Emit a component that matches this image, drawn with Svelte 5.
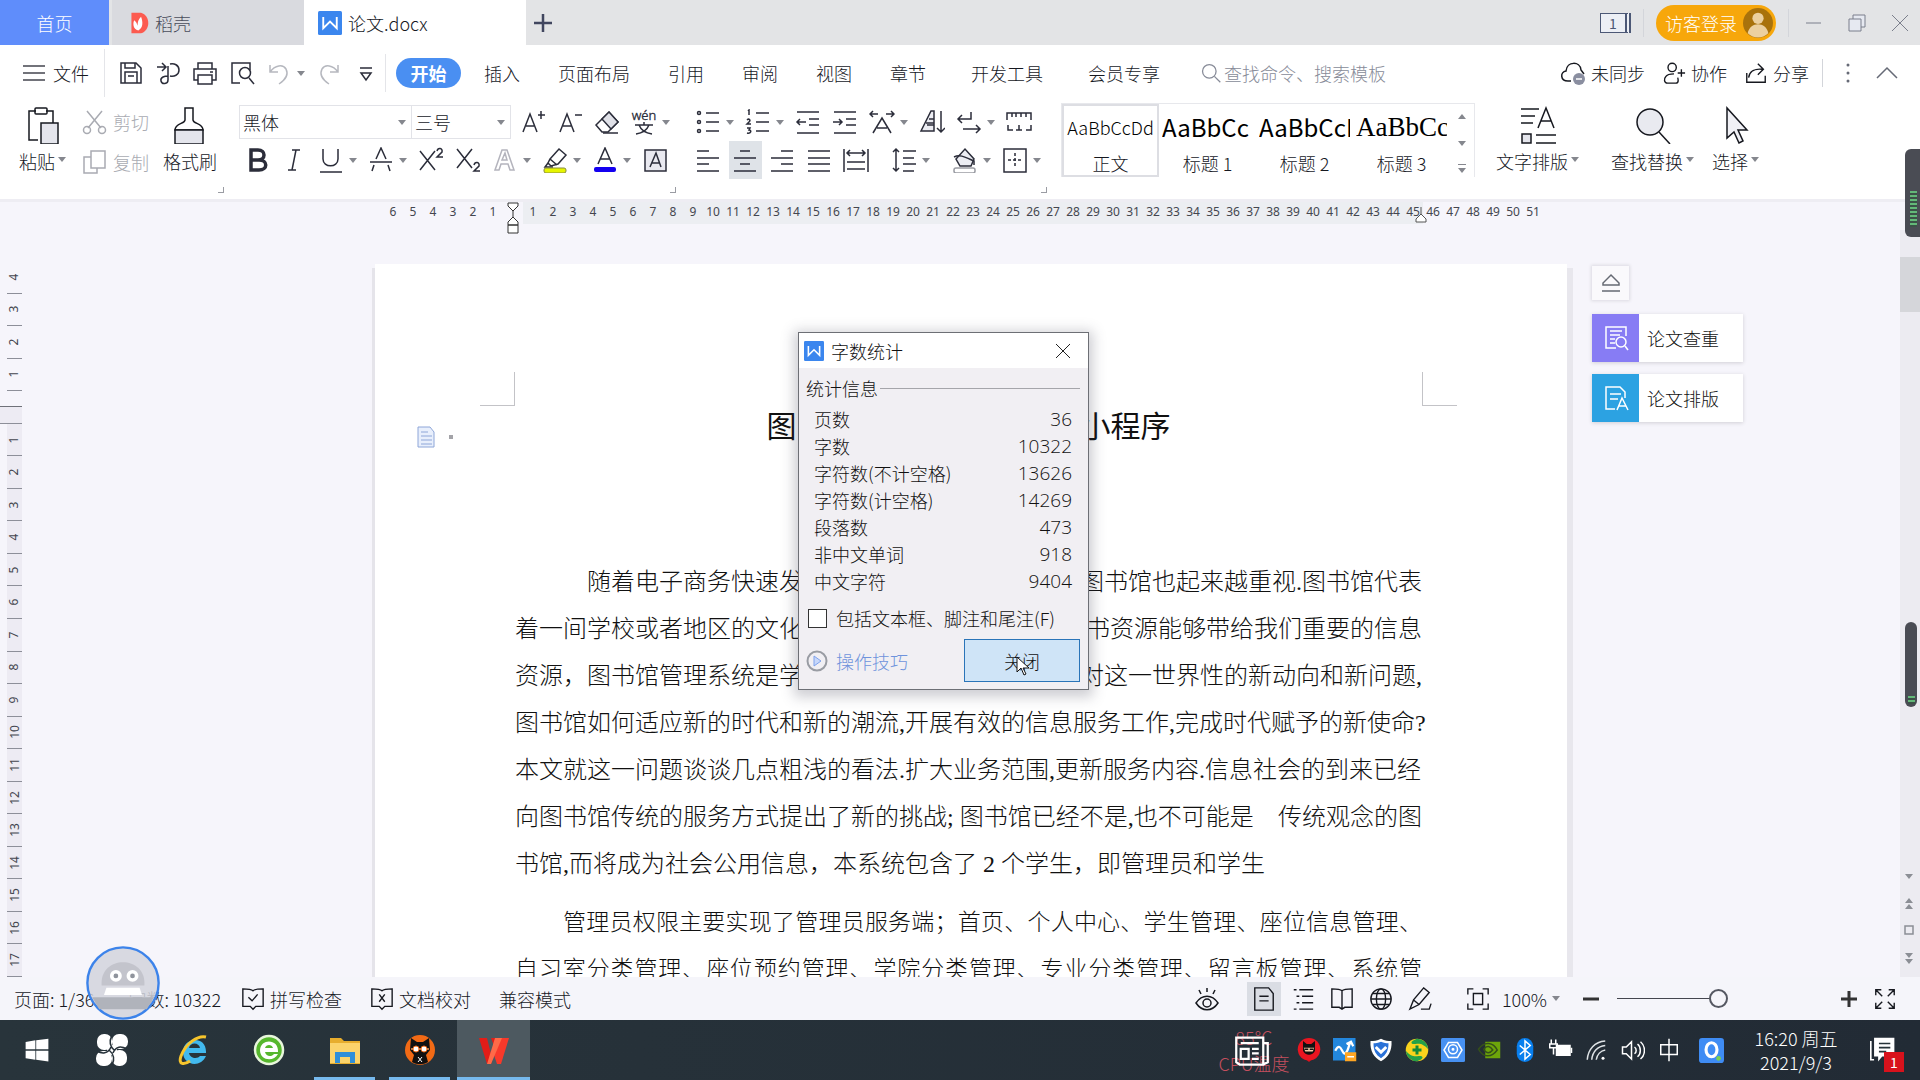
<script>
    let fontName = '黑体';
    let fontSize = '三号';
    let zoom = 50;
    let includeNotes = false;

    const menuTabs = [
        { label: '插入' },
        { label: '页面布局' },
        { label: '引用' },
        { label: '审阅' },
        { label: '视图' },
        { label: '章节' },
        { label: '开发工具', wide: true },
        { label: '会员专享', wide: true }
    ];

    const quickTools = [
        { icon: 'save', label: '保存' },
        { icon: 'output', label: '输出' },
        { icon: 'print', label: '打印' },
        { icon: 'preview', label: '打印预览' },
        { icon: 'undo', label: '撤销', faded: true, caret: true },
        { icon: 'redo', label: '恢复', faded: true },
        { icon: 'custom', label: '自定义' }
    ];

    const fontRow1 = [
        { icon: 'grow', label: '增大字号' },
        { icon: 'shrink', label: '减小字号' },
        { icon: 'eraser', label: '清除格式' },
        { icon: 'pinyin', label: '拼音指南', caret: true }
    ];

    const fontRow2 = [
        { icon: 'bold', label: '加粗' },
        { icon: 'italic', label: '倾斜' },
        { icon: 'underline', label: '下划线', caret: true },
        { icon: 'strike', label: '删除线', caret: true },
        { icon: 'sup', label: '上标' },
        { icon: 'sub', label: '下标' },
        { icon: 'effect', label: '文字效果', caret: true },
        { icon: 'highlight', label: '突出显示', caret: true },
        { icon: 'color', label: '字体颜色', caret: true },
        { icon: 'shade', label: '字符底纹' }
    ];

    const paraRow1 = [
        { icon: 'bullets', label: '项目符号', caret: true },
        { icon: 'numbers', label: '编号', caret: true },
        { icon: 'outdent', label: '减少缩进' },
        { icon: 'indent', label: '增加缩进' },
        { icon: 'scale', label: '中文版式', caret: true },
        { icon: 'sort', label: '排序' },
        { icon: 'marks', label: '显示标记', caret: true },
        { icon: 'tabs', label: '制表位' }
    ];

    const paraRow2 = [
        { icon: 'left', label: '左对齐' },
        { icon: 'center', label: '居中', active: true },
        { icon: 'right', label: '右对齐' },
        { icon: 'justify', label: '两端对齐' },
        { icon: 'spread', label: '分散对齐' },
        { icon: 'spacing', label: '行距', caret: true, apart: true },
        { icon: 'fill', label: '底纹颜色', caret: true, apart: true },
        { icon: 'border', label: '边框', caret: true }
    ];

    const styleItems = [
        { sample: 'AaBbCcDd', label: '正文', kind: 'body' },
        { sample: 'AaBbCc', label: '标题 1', kind: 'head' },
        { sample: 'AaBbCcD', label: '标题 2', kind: 'head' },
        { sample: 'AaBbCc', label: '标题 3', kind: 'serif' }
    ];

    const bigTools = [
        { icon: 'typeset', label: '文字排版' },
        { icon: 'find', label: '查找替换' },
        { icon: 'pointer', label: '选择' }
    ];

    const rulerBefore = [6, 5, 4, 3, 2, 1];
    const rulerAfter = Array.from({ length: 51 }, (_, i) => i + 1);
    const sideBefore = [4, 3, 2, 1];
    const sideAfter = Array.from({ length: 17 }, (_, i) => i + 1);

    // the dialog lies between the start and the end of each split line
    const paragraph1 = [
        { start: '随着电子商务快速发', end: '图书馆也起来越重视.图书馆代表', indent: 3 },
        { start: '着一间学校或者地区的文化', end: '书资源能够带给我们重要的信息' },
        { start: '资源，图书馆管理系统是学校', end: '对这一世界性的新动向和新问题,' },
        { start: '图书馆如何适应新的时代和新的潮流,开展有效的信息服务工作,完成时代赋予的新使命?' },
        { start: '本文就这一问题谈谈几点粗浅的看法.扩大业务范围,更新服务内容.信息社会的到来已经' },
        { start: '向图书馆传统的服务方式提出了新的挑战; 图书馆已经不是,也不可能是', end: '传统观念的图' },
        { start: '书馆,而将成为社会公用信息，本系统包含了 2 个学生，即管理员和学生' }
    ];
    const paragraph2 = [
        { start: '管理员权限主要实现了管理员服务端；首页、个人中心、学生管理、座位信息管理、', indent: 2, full: true },
        { start: '自习室分类管理、座位预约管理、学院分类管理、专业分类管理、留言板管理、系统管', full: true }
    ];

    const stats = [
        ['页数', 36],
        ['字数', 10322],
        ['字符数(不计空格)', 13626],
        ['字符数(计空格)', 14269],
        ['段落数', 473],
        ['非中文单词', 918],
        ['中文字符', 9404]
    ];

    const views = [
        { icon: 'page', label: '页面视图', active: true },
        { icon: 'outline', label: '大纲' },
        { icon: 'book', label: '阅读版式' },
        { icon: 'globe', label: 'Web版式' },
        { icon: 'pen', label: '写作模式' }
    ];

    const apps = [
        { icon: 'windows', label: '开始' },
        { icon: 'swirl', label: '助手' },
        { icon: 'ie', label: 'Internet Explorer', apart: true },
        { icon: 'browser', label: '浏览器' },
        { icon: 'folder', label: '文件资源管理器', open: true },
        { icon: 'cat', label: '录屏', open: true },
        { icon: 'wps', label: 'WPS', open: true, active: true }
    ];

    const tray = ['ninja', 'sync', 'shield', 'plus360', 'hex', 'nvidia', 'bluetooth', 'battery', 'wifi', 'sound', 'ime'];

    const icons = {
        // title bar and menu row
        save: '<path d="M3 3h15l5 5v15H3z"/><path d="M7 3v5h10V3M7 23V12h12v11M10 16h6"/>',
        output: '<path d="M2 7h9M7 3l4 4-4 4M15 4c4-1 9 1 9 6s-5 7-9 6M13 6v14c0 4-6 5-7 1s4-5 7-5"/>',
        print: '<path d="M6 9V3h14v6M6 20H2V9h22v11h-4M6 15h14v9H6zM18 12h3"/>',
        preview: '<path d="M11 23H3V3h18v7"/><circle cx="16" cy="13" r="5.500"/><path d="M20 18l5 6"/>',
        undo: '<path d="M4 5v7h8M4 12C9 5 17 4 20 9c3 6-1 11-7 15"/>',
        redo: '<path d="M22 5v7h-8M22 12C17 5 9 4 6 9c-3 6 1 11 7 15"/>',
        custom: '<path d="M7 8h12M8 13h10l-5 7z"/>',
        search: '<circle cx="11" cy="11" r="8"/><path d="M17 17l7 7"/>',
        cloud: '<path d="M11 21H8c-8 0-8-9-2-10C7 1 20 1 21 10l3 4"/><circle cx="19" cy="19" r="6" fill="#8a8ea0" stroke="none"/><path d="M16 19h6" stroke="#fff"/>',
        people: '<circle cx="11" cy="7" r="4.500"/><path d="M17 18c0 0 2 6-2 6H6c-4 0-4-5-2-7 2-3 6-3 9-3M17 13h8M21 9v8"/>',
        share: '<path d="M3 13v10h20v-7M5 18c1-7 7-10 15-9M15 3l6 6-6 6"/>',
        // ribbon
        paste: '<path d="M14 34H5V5h7M22 5h7v12"/><rect x="11" y="2" width="12" height="6" rx="1"/><rect x="17" y="17" width="17" height="21" fill="#e4e5ec"/>',
        cut: '<path d="M5 2l14 17M20 2L6 19"/><circle cx="5" cy="21" r="3.500"/><circle cx="20" cy="21" r="3.500"/>',
        copy: '<path d="M9 2h14v17H9z"/><path d="M9 8H2v16h13v-5"/>',
        brush: '<path d="M14 2h8v12c0 4 10 3 10 10H4c0-7 10-6 10-10z"/><path d="M4 24h28v14H4z" fill="#e4e5ec"/>',
        grow: '<path d="M3 23L10 5l7 18M6 17h8M18 6h7M21 2v8"/>',
        shrink: '<path d="M3 23L10 5l7 18M6 17h8M18 6h7"/>',
        eraser: '<path d="M2 16L15 3l9 10-10 10H8z"/><path d="M8 10l9 10 7-7-9-10z" fill="#e0e1e8"/><path d="M9 24h15"/>',
        pinyin: '<text x="13" y="11" text-anchor="middle" font-size="13" fill="#2b2d3a" stroke="#2b2d3a" stroke-width="0.400" font-family="Noto Sans">wén</text><path d="M4 16h18M13 13v3M18 16c-2 5-6 8-13 9M8 16c2 5 6 8 13 9"/>',
        bold: '<path d="M7 3h7c8 0 8 10 0 10H7zM7 13h8c9 0 9 10 0 10H7z" stroke-width="3.500"/>',
        italic: '<path d="M11 3h8M7 23h8M15 3l-4 20"/>',
        underline: '<path d="M5 2v10c0 9 15 9 15 0V2M2 25h22"/>',
        strike: '<path d="M2 15h22M8 12l5-11 5 11M6 18l-2 6M20 18l2 6"/>',
        sup: '<path d="M2 4l15 19M17 4L2 23M19 4c1-4 6-3 5 1l-5 5h6"/>',
        sub: '<path d="M2 2l15 19M17 2L2 21M19 18c1-4 6-3 5 1l-5 5h6"/>',
        effect: '<path d="M3 23L10 3h5l7 20h-4l-2-6H9l-2 6zM10 13h5l-2-7z" stroke="#b4b4bd"/>',
        highlight: '<path d="M8 12l9-10 7 6-8 9-7 2-3-3zM8 12l7 6"/><path d="M6 16l-3 4h8" /><rect x="2" y="21" width="22" height="5" rx="2" fill="#e6f500" stroke="#888b40" stroke-width="1"/>',
        color: '<path d="M6 17L13 1l7 16M8 12h10"/><rect x="2" y="20" width="22" height="5" rx="2" fill="#1400f0" stroke="none"/>',
        shade: '<rect x="3" y="3" width="21" height="21" fill="#e9e9f0"/><path d="M8 20l6-14 5 14M10 16h8"/>',
        bullets: '<circle cx="4" cy="4" r="1.500"/><circle cx="4" cy="13" r="1.500"/><circle cx="4" cy="22" r="1.500"/><path d="M11 4h13M11 13h13M11 22h13"/>',
        numbers: '<path d="M11 4h13M11 13h13M11 22h13M3 2l1-1v5M2 11c2-2 4 0 2 2l-2 2h4M2 19h3l-1 2c3 0 2 4-2 3"/>',
        outdent: '<path d="M2 3h22M14 10h10M14 16h10M2 24h22M11 13H2M5 10l-3 3 3 3"/>',
        indent: '<path d="M2 3h22M14 10h10M14 16h10M2 24h22M1 13h9M7 10l3 3-3 3"/>',
        scale: '<path d="M4 24L13 9l9 15M8 19h10M1 5h8M4 2L1 5l3 3M25 5h-8M22 2l3 3-3 3"/>',
        sort: '<path d="M8 16h7M10 10h5M15 2v20H2L12 2z" fill="#ecedf3"/><path d="M7 14h8M22 2v21M18 19l4 4 4-4"/>',
        marks: '<path d="M15 3v7H3M6 6L2 10l4 4M7 20h17M20 16l4 4-4 4"/>',
        tabs: '<path d="M1 11V4h24v7M6 4v4M10 4v4M15 4v4M20 4v4M2 16v5h5M25 16v5h-5M13 16v5M10 21h6"/>',
        left: '<path d="M2 4h12M2 11h22M2 17h12M2 24h22"/>',
        center: '<path d="M8 4h10M2 11h22M8 17h10M2 24h22"/>',
        right: '<path d="M12 4h12M2 11h22M12 17h12M2 24h22"/>',
        justify: '<path d="M2 4h22M2 11h22M2 17h22M2 24h22"/>',
        spread: '<path d="M1 2v23M25 2v23M4 6h18M7 3L4 6l3 3M19 3l3 3-3 3M4 15h18M4 22h18"/>',
        spacing: '<path d="M5 2v22M2 5l3-3 3 3M2 21l3 3 3-3M12 4h13M12 11h11M12 17h13M12 24h11"/>',
        fill: '<path d="M4 12L13 2l9 10-3 7H8z" fill="#ecedf3"/><path d="M2 10c6-3 11 0 20 4v4"/><rect x="2" y="21" width="21" height="5" rx="2" stroke="#9a9ca3" fill="#fff"/>',
        border: '<path d="M2 2h22v23H2z"/><path d="M13 6v15M6 13h14" stroke-dasharray="3 2"/>',
        typeset: '<path d="M2 3h18M2 10h14M2 17h12M19 22L27 2l8 20M22 15h10M17 29h20M17 37h20"/><path d="M3 28h9v9H3z" fill="#e4e5ec"/>',
        find: '<circle cx="16" cy="16" r="13" fill="#e9eaf0"/><path d="M25 26l11 12"/>',
        pointer: '<path d="M10 2v30l7-6 5 11 4-2-5-11h9z" fill="#f0f0f5"/>',
        // status bar
        spell: '<path d="M13 4c-2-2-5-2-11-2v19h8l3 3 3-3h8V2c-6 0-9 0-11 2z"/><path d="M8 11l4 4 6-7"/>',
        proof: '<path d="M13 4c-2-2-5-2-11-2v19h8l3 3 3-3h8V2c-6 0-9 0-11 2z"/><path d="M10 8l6 8M16 8l-6 8"/>',
        eye: '<path d="M2 17c6-9 16-9 22 0-6 9-16 9-22 0z"/><circle cx="13" cy="17" r="4"/><path d="M13 2v4M5 4l2 4M21 4l-2 4"/>',
        page: '<path d="M3 1h15l5 6v18H3zM8 10h10M8 15h10"/>',
        outline: '<path d="M3 3h3M9 3h15M6 10h3M12 10h12M6 17h3M12 17h12M3 24h3M9 24h15"/>',
        book: '<path d="M13 4c-2-2-5-2-11-2v20h8l3 2 3-2h8V2c-6 0-9 0-11 2zM13 4v20"/>',
        globe: '<circle cx="13" cy="13" r="11"/><ellipse cx="13" cy="13" rx="5" ry="11"/><path d="M2 13h22M4 7h18M4 19h18"/>',
        pen: '<path d="M2 24l4-10L17 1l6 5-11 13zM6 14l6 5M14 24h9l2-6"/>',
        fit: '<path d="M2 8V2h6M18 2h6v6M24 18v6h-6M8 24H2v-6M8 7h10v12H8z"/>',
        expand: '<path d="M3 9V3h6M3 3l7 7M17 3h6v6M23 3l-7 7M3 17v6h6M3 23l7-7M23 17v6h-6M23 23l-7-7"/>',
        // floating panel
        check: '<path d="M13 23H3V2h20v9M7 6h12M7 10h10M7 14h5M7 18h5"/><circle cx="18" cy="17" r="5"/><path d="M22 21l3 4"/>',
        layout: '<path d="M12 24H3V2h14l5 5v6M7 9h11M7 14h8M14 25l5-12 6 12M16 21h7"/>'
    };

    // coloured pictures, each on a 32 unit canvas
    const pictures = {
        wfile: '<rect width="32" height="32" rx="2" fill="#3b86ee"/><path d="M7 8v15l9-9 9 9V8" fill="none" stroke="#fff" stroke-width="2.500"/>',
        docer: '<path d="M5 1h14c14 4 14 26 0 30H5z" fill="#fc5b50"/><path d="M15 27C7 25 7 16 9 12c3 2 4 5 5 8 0-6 1-9 5-13 3 8 3 16-4 20z" fill="#fff"/>',
        user: '<circle cx="16" cy="16" r="16" fill="#a9720c"/><circle cx="16" cy="11" r="6" fill="#ecd0a0"/><path d="M5 27c2-13 20-13 22 0-6 6-16 6-22 0z" fill="#ecd0a0"/>',
        robot: '<circle cx="16" cy="16" r="15" fill="#d2d4dc" fill-opacity="0.850" stroke="#3c83ea" stroke-width="1"/><path d="M7 17c-1-13 19-13 18 0z" fill="#c3c4cc"/><circle cx="13" cy="13" r="2.500" fill="#fff"/><circle cx="20" cy="13" r="2.500" fill="#fff"/><circle cx="13" cy="13" r="1" fill="#8f939c"/><circle cx="20" cy="13" r="1" fill="#8f939c"/><path d="M9 18h14l1 3H8z" fill="#fff"/><path d="M3 22h26l-3 5H6z" fill="#b0b3bb"/>',
        windows: '<path d="M2 6l12-2v11H2zM15 4l15-2v13H15zM2 17h12v11L2 26zM15 17h15v13l-15-2z" fill="#fff"/>',
        swirl: '<g fill="#fff"><rect x="1" y="0" width="15" height="16" rx="7"/><rect x="16" y="0" width="16" height="15" rx="7"/><rect x="16" y="16" width="15" height="16" rx="7"/><rect x="0" y="17" width="16" height="15" rx="7"/><circle cx="16" cy="16" r="5"/></g><g fill="none" stroke="#27323a" stroke-width="1.500"><path d="M16 1c-3 6-2 12 3 16M31 15c-6-3-11-3-14 4M16 31c3-5 2-11-3-15M1 17c5 3 11 3 14-4"/></g>',
        ie: '<path d="M28 19H11c1 6 9 6 11 3h6C23 34 5 32 5 18 5 3 29 1 28 19zM11 14h11c-1-6-10-6-11 0z" fill="#42b9ee"/><path d="M28 3C20 1 8 9 3 22c-3 9 3 9 9 5" fill="none" stroke="#f7c52c" stroke-width="3"/>',
        browser: '<circle cx="16" cy="16" r="14" fill="#56b72d" stroke="#e8f6dc" stroke-width="2.500"/><path d="M25 18H12c1 5 7 5 9 2h4C21 28 7 27 7 16 8 4 26 5 25 18zM12 14h8c-1-4-7-4-8 0z" fill="#fff"/>',
        folder: '<path d="M1 4h11l3 3h16v23H1z" fill="#e7ad2d"/><path d="M1 9h30v20H1z" fill="#fbd36b"/><path d="M6 29V18h20v11h-5v-6h-10v6z" fill="#2f8ed8"/>',
        cat: '<circle cx="16" cy="16" r="15" fill="#f26a15"/><path d="M7 4l6 4h6l6-4 1 12-4 5 2 7c-5 3-11 3-16 0l2-7-4-5z" fill="#111"/><path d="M7 15h18" stroke="#f79b54" stroke-width="1.500"/><circle cx="12" cy="15" r="3" fill="#fff" stroke="#f26a15"/><circle cx="20" cy="15" r="3" fill="#fff" stroke="#f26a15"/><path d="M14 23l4 5M18 23l-4 5" stroke="#fff"/>',
        wps: '<path d="M1 4h8l4 16 3-8-3-8h8L13 30H9z" fill="#e21d18"/><path d="M22 4h9L23 30h-4l-3-9z" fill="#f8392a"/><path d="M17 4h7L13 30H9z" fill="#ff6a48"/>',
        ninja: '<path d="M7 24h18l-9 8z" fill="#d8101c"/><circle cx="16" cy="15" r="15" fill="#e91520"/><path d="M8 4l5 4h6l5-4v13c-3 7-13 7-16 0z" fill="#111"/><path d="M9 13h14l-2 5H11z" fill="#f7cda8"/><path d="M10 15h5M17 15h5" stroke="#111" stroke-width="2"/>',
        sync: '<rect width="30" height="30" fill="#2387dd"/><path d="M3 17c8-15 9 8 14 3 4-4 3-8 6-14M18 8l6-3 3 6" fill="none" stroke="#fff" stroke-width="3"/><rect x="16" y="19" width="15" height="12" fill="#ffa623"/><path d="M19 25h9" stroke="#fff" stroke-width="2"/>',
        shield: '<path d="M16 1c5 3 10 3 14 3 1 14-5 22-14 27C7 26 1 18 2 4c4 0 9 0 14-3z" fill="#fff"/><path d="M16 5c4 2 7 2 10 2 0 10-3 15-10 20C9 22 6 17 6 7c3 0 6 0 10-2z" fill="#2a72d8"/><path d="M9 12l7 7 7-7" fill="none" stroke="#fff" stroke-width="4"/>',
        plus360: '<circle cx="16" cy="16" r="15" fill="#f9d31c"/><path d="M16 1a15 15 0 0 1 15 14c-7-8-12-8-17-7C8 9 5 5 16 1zM16 31A15 15 0 0 1 1 17c7 8 12 8 17 7 6-1 9 3-2 7z" fill="#24a148"/><path d="M16 10v12M10 16h12" stroke="#13893a" stroke-width="4"/>',
        hex: '<rect width="32" height="32" rx="2" fill="#4791f2"/><g fill="none" stroke="#fff" stroke-width="2"><path d="M10 6h12l6 10-6 10H10L4 16z"/><circle cx="16" cy="15" r="6"/><circle cx="16" cy="15" r="1"/></g>',
        nvidia: '<rect x="11" y="5" width="20" height="22" fill="#6da50a"/><g fill="none" stroke="#35501a" stroke-width="2"><path d="M2 15c8-12 20-9 25 1-8 11-19 10-25-1z"/><path d="M9 15c4-6 9-4 12 1-4 5-9 5-12-1z"/></g>',
        bluetooth: '<rect x="5" y="0" width="22" height="32" rx="11" fill="#087fee"/><path d="M9 10l14 12-7 6V4l7 6L9 22" fill="none" stroke="#fff" stroke-width="2"/>',
        battery: '<g fill="none" stroke="#fff" stroke-width="2"><path d="M3 2v6M9 2v6M1 8h10v5H1zM6 13v9"/></g><rect x="9" y="9" width="20" height="15" fill="#fff"/><path d="M30 13v7" stroke="#fff" stroke-width="2"/>',
        wifi: '<g fill="none" stroke="#dfe3e6" stroke-width="2"><path d="M3 29C4 15 13 5 27 4M9 29c1-11 8-18 18-19M15 29c1-7 6-12 12-13"/></g><circle cx="24" cy="27" r="2" fill="#fff"/>',
        sound: '<g fill="none" stroke="#fff" stroke-width="2"><path d="M2 12h5l7-7v23l-7-7H2zM18 12c3 2 3 7 0 9M22 8c5 4 5 13 0 17M26 5c7 6 7 17 0 23"/></g>',
        ime: '<g fill="none" stroke="#fff" stroke-width="2"><path d="M5 9h22v13H5zM16 1v30"/></g>',
        news: '<g fill="none" stroke="#fff" stroke-width="2"><path d="M2 4h24v24H5l-3-2zM26 9h4v17l-4 2M6 9h16M6 14h7v9H6zM16 14h6M16 18h6M16 23h6"/></g>',
        q: '<rect width="32" height="32" rx="4" fill="#3f8cf4"/><ellipse cx="16" cy="15" rx="7" ry="9" fill="none" stroke="#fff" stroke-width="4"/><circle cx="25" cy="26" r="3" fill="#7ad04e"/>',
        notice: '<path d="M5 1h25v23H15l-5 6v-6H5z" fill="#fff"/><path d="M1 5v23h4" fill="none" stroke="#fff" stroke-width="2"/><path d="M11 8h14M11 13h14M11 18h9" stroke="#263238" stroke-width="2"/>'
    };
</script>

{#snippet icon(name, size = 26, box = 26)}
    <svg width={size} height={size} viewBox="0 0 {box} {box}" fill="none" stroke="currentColor" stroke-width="1.5" aria-hidden="true">{@html icons[name]}</svg>
{/snippet}

{#snippet picture(name, size = 32)}
    <svg width={size} height={size} viewBox="0 0 32 32" aria-hidden="true">{@html pictures[name]}</svg>
{/snippet}

{#snippet tools(list)}
    {#each list as tool}
        <button class="tool" class:with-caret={tool.caret} class:active={tool.active} class:apart={tool.apart} class:faded={tool.faded} aria-label={tool.label}>
            {@render icon(tool.icon)}
            {#if tool.caret}<i class="caret"></i>{/if}
        </button>
    {/each}
{/snippet}

{#snippet lines(list)}
    {#each list as line}
        <span class="line" class:indent2={line.indent === 2} class:indent3={line.indent === 3} class:full={line.full}>
            <span>{line.start}</span>
            {#if line.end}<span>{line.end}</span>{/if}
        </span>
    {/each}
{/snippet}

<div class="screen">
    <header class="titlebar">
        <button class="home-tab">首页</button>
        <button class="doc-tab">{@render picture('docer', 22)}稻壳</button>
        <button class="doc-tab current">{@render picture('wfile', 24)}论文.docx</button>
        <button class="new-tab" aria-label="新建">
            <svg width="18" height="18" viewBox="0 0 18 18" stroke="#41465f" stroke-width="2.500"><path d="M9 0v18M0 9h18" /></svg>
        </button>
        <div class="window-tools">
            <span class="count"><b>1</b></span>
            <i class="rule"></i>
            <button class="login">访客登录{@render picture('user', 30)}</button>
            <i class="rule"></i>
            <button aria-label="最小化"><svg width="18" height="18" viewBox="0 0 18 18" stroke="#7b7f8c"><path d="M1 9h15" /></svg></button>
            <button aria-label="还原"><svg width="18" height="18" viewBox="0 0 18 18" stroke="#7b7f8c" fill="#e6e9f1"><path d="M5 5V1h12v12h-4M1 5h12v12H1z" /></svg></button>
            <button aria-label="关闭窗口"><svg width="18" height="18" viewBox="0 0 18 18" stroke="#7b7f8c"><path d="M1 1l16 16M17 1L1 17" /></svg></button>
        </div>
    </header>

    <nav class="menu">
        <button class="file">
            <svg width="22" height="18" viewBox="0 0 22 18" stroke="#44464f" stroke-width="1.500"><path d="M0 2h22M0 9h22M0 16h22" /></svg>
            文件
        </button>
        <div class="quick">{@render tools(quickTools)}</div>
        <button class="start">开始</button>
        <div class="menu-tabs">
            {#each menuTabs as tab}
                <button class:wide={tab.wide}>{tab.label}</button>
            {/each}
        </div>
        <label class="search">
            {@render icon('search', 22)}
            <input type="text" placeholder="查找命令、搜索模板" />
        </label>
        <div class="account">
            <button>{@render icon('cloud', 26)}未同步</button>
            <button>{@render icon('people', 24)}协作</button>
            <button>{@render icon('share', 24)}分享</button>
            <i class="rule"></i>
            <button aria-label="更多"><svg width="6" height="22" viewBox="0 0 6 22" fill="#666a76"><circle cx="3" cy="3" r="1.500" /><circle cx="3" cy="11" r="1.500" /><circle cx="3" cy="19" r="1.500" /></svg></button>
            <button class="fold" aria-label="收起功能区"><svg width="22" height="14" viewBox="0 0 22 14" fill="none" stroke="#666a76" stroke-width="1.500"><path d="M1 12L11 2l10 10" /></svg></button>
        </div>
    </nav>

    <section class="ribbon">
        <div class="group clipboard">
            <button class="big">{@render icon('paste', 38, 38)}<span>粘贴<i class="caret"></i></span></button>
            <div class="stack">
                <button>{@render icon('cut')}剪切</button>
                <button>{@render icon('copy')}复制</button>
            </div>
            <button class="big">{@render icon('brush', 38, 38)}<span>格式刷</span></button>
            <i class="corner"></i>
        </div>
        <div class="group rows fonts">
            <div class="row">
                <div class="pickers">
                    <span class="picker family"><select aria-label="字体" bind:value={fontName}><option>黑体</option></select><i class="caret"></i></span>
                    <span class="picker"><select aria-label="字号" bind:value={fontSize}><option>三号</option></select><i class="caret"></i></span>
                </div>
                {@render tools(fontRow1)}
            </div>
            <div class="row">{@render tools(fontRow2)}</div>
            <i class="corner"></i>
        </div>
        <div class="group rows">
            <div class="row">{@render tools(paraRow1)}</div>
            <div class="row">{@render tools(paraRow2)}</div>
            <i class="corner"></i>
        </div>
        <div class="gallery">
            {#each styleItems as item, i}
                <button class:chosen={i === 0}>
                    <span class="sample {item.kind}">{item.sample}</span>
                    <span>{item.label}</span>
                </button>
            {/each}
            <div class="gallery-scroll">
                <i class="caret up"></i>
                <i class="caret"></i>
                <i class="caret more"></i>
            </div>
        </div>
        <div class="big-tools">
            {#each bigTools as tool}
                <button class="big">{@render icon(tool.icon, 38, 38)}<span>{tool.label}<i class="caret"></i></span></button>
            {/each}
        </div>
    </section>

    <main class="workspace">
        <aside class="side-ruler">
            {#each sideBefore as n}
                <span class="tick"><b>{n}</b></span>
            {/each}
            <span class="zero"></span>
            {#each sideAfter as n}
                <span class="tick below"><b>{n}</b></span>
            {/each}
        </aside>

        <div class="paper-column">
            <div class="ruler">
                {#each rulerBefore as n}<span>{n}</span>{/each}
                <span class="marker">
                    <svg width="12" height="32" viewBox="0 0 12 32" fill="#fff" stroke="#333"><path d="M1 1h10v3l-5 5-5-5zM6 9v6M6 15l5 5v3H1v-3zM1 23h10v8H1z" /></svg>
                </span>
                {#each rulerAfter as n}<span class:inside={n < 46}>{n}</span>{/each}
                <svg class="right-marker" width="12" height="16" viewBox="0 0 12 16" fill="#fff" stroke="#555"><path d="M6 0v7M6 7l5 5v3H1v-3z" /></svg>
            </div>
            <article class="paper">
                <div class="crop-marks"><i></i><i></i></div>
                <svg class="smart-tag" width="20" height="22" viewBox="0 0 20 22" fill="#e8effc" stroke="#8ea6d8"><path d="M1 1h12l4 5v15H1zM4 6h7M4 10h11M4 14h11M4 18h11" /></svg>
                <i class="tag-dot"></i>
                <h1><span>图</span><span>小程序</span></h1>
                <p>{@render lines(paragraph1)}</p>
                <p>{@render lines(paragraph2)}</p>
            </article>

            <div class="dialog" role="dialog" aria-labelledby="count-title">
                <div class="dialog-head">
                    {@render picture('wfile', 20)}
                    <span id="count-title">字数统计</span>
                    <button aria-label="关闭对话框"><svg width="16" height="16" viewBox="0 0 16 16" stroke="#222"><path d="M1 1l14 14M15 1L1 15" /></svg></button>
                </div>
                <div class="dialog-body">
                    <div class="legend">统计信息</div>
                    <table>
                        <tbody>
                            {#each stats as [name, value]}
                                <tr><th scope="row">{name}</th><td>{value}</td></tr>
                            {/each}
                        </tbody>
                    </table>
                    <label class="include"><input type="checkbox" bind:checked={includeNotes} />包括文本框、脚注和尾注(F)</label>
                    <div class="dialog-foot">
                        <a href="#tips">
                            <svg width="22" height="22" viewBox="0 0 22 22" fill="none" stroke="#999ca3" stroke-width="2"><circle cx="11" cy="11" r="9.500" /><path d="M8 6l7 5-7 5z" fill="#c7d7fa" stroke="#7fa2ec" stroke-width="1" /></svg>
                            操作技巧
                        </a>
                        <button>
                            关闭
                            <svg class="cursor" width="14" height="20" viewBox="0 0 14 20" fill="#fff" stroke="#111"><path d="M1 1v15l4-4 3 7 2-1-3-6h6z" /></svg>
                        </button>
                    </div>
                </div>
            </div>
        </div>

        <aside class="helpers">
            <button class="collapse" aria-label="收起">
                <svg width="20" height="20" viewBox="0 0 20 20" fill="none" stroke="#666a73" stroke-width="1.500"><path d="M10 2l8 8v2H2v-2zM1 18h18" /></svg>
            </button>
            <button class="helper"><i class="purple">{@render icon('check')}</i><span>论文查重</span></button>
            <button class="helper"><i class="blue">{@render icon('layout')}</i><span>论文排版</span></button>
        </aside>

        <div class="scrollbar">
            <i class="thumb"></i>
            <svg width="14" height="100" viewBox="0 0 14 100" fill="#8b8e95"><path d="M3 2h8l-4 5zM3 31l4-5 4 5zM3 37l4-5 4 5z" /><path d="M3 54h8v8H3z" fill="none" stroke="#8b8e95" stroke-width="1.500" /><path d="M3 81h8l-4 5zM3 87h8l-4 5z" /></svg>
        </div>
    </main>

    <footer class="status">
        <span>页面: 1/36</span>
        <span class="words">字数: 10322</span>
        <button>{@render icon('spell', 24)}拼写检查</button>
        <button class="second">{@render icon('proof', 24)}文档校对</button>
        <span class="mode">兼容模式</span>
        <div class="status-right">
            <button class="eye" aria-label="护眼模式">{@render icon('eye')}</button>
            {#each views as view}
                <button class="view" class:active={view.active} aria-label={view.label}>{@render icon(view.icon, 24)}</button>
            {/each}
            <button class="fit" aria-label="最佳显示比例">{@render icon('fit', 24)}</button>
            <button class="percent">100%<i class="caret"></i></button>
            <button class="sign" aria-label="缩小"><svg width="16" height="16" viewBox="0 0 16 16" stroke="#333" stroke-width="3"><path d="M0 8h16" /></svg></button>
            <input type="range" min="0" max="100" aria-label="显示比例" bind:value={zoom} />
            <button class="sign" aria-label="放大"><svg width="16" height="16" viewBox="0 0 16 16" stroke="#333" stroke-width="3"><path d="M0 8h16M8 0v16" /></svg></button>
            <button class="full-screen" aria-label="全屏">{@render icon('expand', 24)}</button>
        </div>
    </footer>

    <footer class="taskbar">
        {#each apps as app}
            <button class="app" class:apart={app.apart} class:open={app.open} class:active={app.active} aria-label={app.label}>{@render picture(app.icon, 32)}</button>
        {/each}
        <div class="tray">
            <div class="temperature">
                <span>85℃</span>
                <span>CPU温度</span>
                <i>{@render picture('news', 36)}</i>
            </div>
            <div class="tray-icons">
                {#each tray as name}{@render picture(name, 24)}{/each}
            </div>
            {@render picture('q', 25)}
            <time>16:20 周五<br />2021/9/3</time>
            <button class="notice" aria-label="通知">{@render picture('notice', 26)}<b>1</b></button>
        </div>
    </footer>

    <div class="robot">{@render picture('robot', 76)}</div>
    <div class="meter top"><i></i></div>
    <div class="meter bottom"><i></i></div>
</div>

<style>
    :global(body) {
        background: #f6f5fb;
    }

    .screen {
        position: relative;
        display: flex;
        flex-direction: column;
        height: 100vh;
        overflow: hidden;
        font: 300 18px/24px "Noto Sans CJK SC", sans-serif;
        color: #16181f;
    }

    button,
    input,
    select {
        font: inherit;
        color: inherit;
        background: none;
        border: 0;
        padding: 0;
        margin: 0;
        border-radius: 0;
        white-space: nowrap;
    }

    svg {
        display: block;
        flex: none;
    }

    .caret {
        flex: none;
        width: 0;
        height: 0;
        border: 4px solid transparent;
        border-top: 5px solid #85878e;
        border-bottom: 0;
    }

    .caret.up {
        border-top: 0;
        border-bottom: 5px solid #85878e;
    }

    .rule {
        width: 1px;
        height: 28px;
        background: #d3d5da;
    }

    /* title bar */
    .titlebar {
        display: flex;
        flex: none;
        height: 45px;
        background: #e3e4e6;
    }

    .home-tab {
        width: 109px;
        background: #5f8dfb;
        color: #fff;
    }

    .doc-tab {
        display: flex;
        align-items: center;
        gap: 5px;
        width: 192px;
        margin-left: 3px;
        padding-left: 16px;
        background: #d9dadf;
        color: #4a4d5c;
    }

    .doc-tab.current {
        gap: 6px;
        width: 222px;
        margin-left: 0;
        padding-left: 14px;
        background: #fff;
        color: #16181f;
    }

    .new-tab {
        padding: 0 8px;
    }

    .window-tools {
        display: flex;
        align-items: center;
        gap: 12px;
        margin-left: auto;
        padding-right: 11px;
    }

    .window-tools button + button {
        margin-left: 13px;
    }

    .window-tools .rule + button:not(.login) {
        margin-left: 4px;
    }

    .count {
        width: 24px;
        height: 18px;
        border: 1px solid #4c5876;
        border-right: 6px double #4c5876;
        background: #eceff5;
        font-size: 14px;
        line-height: 18px;
        text-align: center;
        color: #4c5876;
    }

    .count b {
        font-weight: 400;
    }

    .login {
        display: flex;
        align-items: center;
        gap: 6px;
        height: 36px;
        padding: 0 3px 0 9px;
        border-radius: 18px;
        background: #f7a70b;
        color: #fff;
    }

    /* menu row */
    .menu {
        display: flex;
        flex: none;
        align-items: center;
        height: 56px;
        background: #fff;
    }

    .file {
        display: flex;
        align-items: center;
        gap: 8px;
        height: 48px;
        padding: 0 15px 0 23px;
        border-right: 1px solid #e4e5e9;
    }

    .quick {
        display: flex;
        margin: 0 10px 0 8px;
        border-right: 1px solid #e4e5e9;
    }

    .tool {
        display: flex;
        align-items: center;
        width: 37px;
        height: 38px;
        padding-left: 5px;
        color: #2b2d3a;
    }

    .tool.with-caret {
        width: 50px;
        gap: 5px;
    }

    .tool.active {
        background: #dfe3e8;
        box-shadow: inset 2px 0 #fff, inset -2px 0 #fff;
    }

    .tool.apart {
        margin-left: 11px;
    }

    .tool.faded {
        color: #b6b8bf;
    }

    .start {
        width: 65px;
        height: 30px;
        border-radius: 15px;
        background: #4a8ff2;
        color: #fff;
        font-weight: 700;
    }

    .menu-tabs {
        display: flex;
        gap: 38px;
        margin-left: 23px;
    }

    .wide {
        margin-left: 7px;
    }

    .search {
        display: flex;
        align-items: center;
        gap: 2px;
        margin-left: 40px;
        color: #878b98;
    }

    .search input {
        width: 180px;
    }

    .search input::placeholder {
        color: #878b98;
        opacity: 1;
    }

    .account {
        display: flex;
        align-items: center;
        gap: 17px;
        margin-left: auto;
        padding-right: 22px;
    }

    .account button {
        display: flex;
        align-items: center;
        gap: 5px;
    }

    .account .rule {
        margin: 0 5px 0 -4px;
    }

    .account .fold {
        margin-left: 8px;
    }

    /* ribbon */
    .ribbon {
        display: flex;
        flex: none;
        align-items: flex-start;
        height: 98px;
        padding-top: 2px;
        box-sizing: border-box;
        background: #fff;
    }

    .group {
        position: relative;
        display: flex;
        height: 92px;
    }

    .corner {
        position: absolute;
        right: 0;
        bottom: 2px;
        width: 5px;
        height: 5px;
        border: solid #9a9ca3;
        border-width: 0 1px 1px 0;
    }

    .clipboard {
        width: 224px;
        margin-right: 15px;
        padding-left: 19px;
        box-sizing: border-box;
    }

    .big {
        display: flex;
        flex-direction: column;
        align-items: center;
        gap: 5px;
        padding-top: 3px;
    }

    .big span {
        display: flex;
        gap: 3px;
    }

    .big .caret {
        margin-top: 8px;
    }

    .stack {
        display: flex;
        flex-direction: column;
        gap: 10px;
        padding: 4px 14px 0 16px;
        color: #a9abb2;
    }

    .stack button {
        display: flex;
        align-items: center;
        gap: 5px;
        height: 30px;
    }

    .rows {
        flex-direction: column;
        margin-right: 14px;
    }

    .row {
        display: flex;
        align-items: center;
        height: 38px;
    }

    .pickers {
        display: flex;
        width: 272px;
        height: 34px;
        margin-right: 4px;
        border: 1px solid #e2e3e8;
        box-sizing: border-box;
    }

    .picker {
        display: flex;
        flex: 1;
        align-items: center;
        padding-right: 5px;
    }

    .picker.family {
        flex: none;
        width: 166px;
        border-right: 1px solid #e2e3e8;
    }

    .picker select {
        flex: 1;
        min-width: 0;
        height: 100%;
        padding-left: 3px;
        appearance: none;
        outline: 0;
    }

    .gallery {
        display: flex;
        height: 74px;
        border: 1px solid #e7e8ec;
        border-bottom: 0;
        box-sizing: border-box;
    }

    .gallery button {
        display: flex;
        flex-direction: column;
        align-items: center;
        justify-content: space-between;
        width: 97px;
        padding: 8px 3px 2px;
        box-sizing: border-box;
        overflow: hidden;
    }

    .gallery button.chosen {
        padding: 6px 0 0;
        border: 2px solid #dddee3;
    }

    .sample {
        width: 100%;
        line-height: 30px;
        text-align: left;
        overflow: hidden;
        color: #000;
    }

    .sample.body {
        text-align: center;
    }

    .sample.head {
        font-size: 24px;
        font-weight: 400;
    }

    .sample.serif {
        font: 400 27px/30px "Liberation Serif", serif;
    }

    .gallery-scroll {
        display: flex;
        flex-direction: column;
        align-items: center;
        justify-content: space-between;
        width: 24px;
        padding: 10px 0 4px;
        box-sizing: border-box;
    }

    .more {
        position: relative;
    }

    .more::before {
        content: "";
        position: absolute;
        left: -4px;
        top: -9px;
        width: 8px;
        border-top: 1px solid #85878e;
    }

    .big-tools {
        display: flex;
        gap: 32px;
        margin-left: 21px;
    }

    .big-tools .big:last-child {
        margin-left: -14px;
    }

    /* workspace */
    .workspace {
        position: relative;
        flex: 1;
        min-height: 0;
        display: grid;
        grid-template-columns: 22px 1fr 1192px 1fr;
        grid-template-rows: 100%;
        background: #f6f5fb;
        border-top: 3px solid #eeedf3;
        overflow: hidden;
    }

    .side-ruler {
        display: flex;
        flex-direction: column;
        padding-top: 59px;
        font: 400 12px/14px "Noto Sans", sans-serif;
        color: #44464f;
    }

    .side-ruler span {
        flex: 1;
        display: flex;
        align-items: center;
        justify-content: center;
        border-bottom: 1px solid #8d8f99;
        margin-left: 7px;
        box-sizing: border-box;
    }

    .side-ruler .below {
        background: #edebf3;
    }

    .side-ruler b {
        font-weight: 400;
        transform: rotate(-90deg);
    }

    .side-ruler .zero {
        margin-left: 0;
        background: linear-gradient(transparent 48%, #6f7179 48%, #6f7179 51%, #edebf3 51%);
    }

    .paper-column {
        position: relative;
        grid-column: 3;
        display: flex;
        flex-direction: column;
        min-width: 0;
    }

    .ruler {
        position: relative;
        display: flex;
        height: 22px;
        padding-left: 8px;
        font: 400 12px/20px "Noto Sans", sans-serif;
        color: #44464f;
    }

    .ruler span {
        flex: none;
        width: 20px;
        text-align: center;
    }

    .ruler .inside {
        background: #eceef2;
    }

    .ruler .marker {
        display: flex;
        justify-content: center;
        align-items: flex-start;
    }

    .right-marker {
        position: absolute;
        left: 1040px;
        top: 5px;
    }

    .paper {
        position: relative;
        flex: 1;
        margin-top: 40px;
        background: #fff;
        box-shadow: -3px 4px 0 #e5e4ea, 6px 4px 0 #e8e7ed;
        overflow: hidden;
        padding: 0 145px 0 140px;
        font: 300 24px/47px "Liberation Serif", "Noto Sans CJK SC", serif;
        color: #111;
    }

    .crop-marks {
        display: flex;
        justify-content: space-between;
        align-items: flex-end;
        height: 142px;
        margin: 0 -35px;
    }

    .crop-marks i {
        width: 34px;
        height: 33px;
        border: solid #c3c3c7;
        border-width: 0 1px 1px 0;
    }

    .crop-marks i:last-child {
        border-width: 0 0 1px 1px;
    }

    .smart-tag {
        position: absolute;
        left: 42px;
        top: 162px;
    }

    .tag-dot {
        position: absolute;
        left: 74px;
        top: 171px;
        width: 4px;
        height: 4px;
        background: #a3a3a8;
    }

    h1 {
        display: flex;
        justify-content: space-between;
        width: 404px;
        margin: 0 auto 117px;
        font: 400 30px/36px "Noto Sans CJK SC", sans-serif;
    }

    p {
        margin: 0 0 11px;
    }

    .line {
        display: flex;
        justify-content: space-between;
        white-space: nowrap;
    }

    .line.full {
        font-size: 23px;
    }

    .line.full span {
        flex: 1;
        white-space: normal;
        text-align: justify;
        text-align-last: justify;
    }

    .indent2 {
        padding-left: 48px;
    }

    .indent3 {
        padding-left: 72px;
    }

    /* word count dialog */
    .dialog {
        position: absolute;
        left: 423px;
        top: 130px;
        width: 291px;
        box-sizing: border-box;
        border: 1px solid #6d6f75;
        background: #f1eff3;
        box-shadow: 0 3px 12px 4px rgba(60, 60, 80, 0.25);
        color: #111;
    }

    .dialog-head {
        display: flex;
        align-items: center;
        gap: 7px;
        height: 35px;
        padding: 0 17px 0 5px;
        background: #fff;
    }

    .dialog-head button {
        margin-left: auto;
    }

    .dialog-body {
        padding: 8px 8px 7px 7px;
    }

    .legend {
        display: flex;
        align-items: center;
        gap: 2px;
    }

    .legend::after {
        content: "";
        flex: 1;
        border-top: 1px solid #a5a5aa;
    }

    table {
        width: 100%;
        margin-top: 5px;
        border-collapse: collapse;
    }

    th,
    td {
        height: 27px;
        padding: 0 8px;
        font-weight: 300;
        line-height: 26px;
        text-align: left;
    }

    td {
        text-align: right;
        font-family: "Open Sans", "Noto Sans", sans-serif;
        font-size: 19px;
    }

    .include {
        display: flex;
        align-items: center;
        gap: 9px;
        margin: 12px 0 0 2px;
    }

    .include input {
        appearance: none;
        width: 19px;
        height: 19px;
        border: 1px solid #333;
        background: #fff;
    }

    .dialog-foot {
        display: flex;
        align-items: center;
        justify-content: space-between;
        margin-top: 9px;
    }

    .dialog-foot a {
        display: flex;
        align-items: center;
        gap: 8px;
        color: #6f93dc;
        text-decoration: none;
    }

    .dialog-foot button {
        position: relative;
        width: 116px;
        height: 43px;
        border: 1px solid #2a74b8;
        background: #cfe4f7;
    }

    .cursor {
        position: absolute;
        left: 51px;
        top: 16px;
    }

    /* floating helpers */
    .helpers {
        grid-column: 4;
        display: flex;
        flex-direction: column;
        align-items: flex-start;
        gap: 12px;
        padding: 64px 0 0 25px;
    }

    .collapse {
        display: flex;
        align-items: center;
        justify-content: center;
        width: 37px;
        height: 34px;
        margin-bottom: 2px;
        background: #faf9fc;
        box-shadow: 0 0 3px 1px #dcdbe2;
    }

    .helper {
        display: flex;
        align-items: center;
        width: 151px;
        height: 48px;
        background: #fff;
        box-shadow: 0 1px 4px #d0cfd6;
        color: #111;
    }

    .helper i {
        display: flex;
        align-items: center;
        justify-content: center;
        width: 47px;
        height: 48px;
        margin-right: 8px;
        color: #fff;
    }

    .purple {
        background: #877cf4;
    }

    .blue {
        background: #2ca2e2;
    }

    .scrollbar {
        position: absolute;
        top: 28px;
        right: 0;
        bottom: 0;
        display: flex;
        flex-direction: column;
        justify-content: space-between;
        width: 20px;
        padding: 27px 0 5px;
        background: #ecebf1;
    }

    .scrollbar svg {
        margin-left: 2px;
    }

    .thumb {
        height: 55px;
        background: #d5d6da;
    }

    /* status bar */
    .status {
        display: flex;
        flex: none;
        align-items: center;
        height: 43px;
        padding: 0 23px 0 14px;
        background: #f5f5fa;
    }

    .status button {
        display: flex;
        align-items: center;
        gap: 5px;
    }

    .words {
        margin: 0 20px 0 34px;
    }

    .second,
    .mode {
        margin-left: 28px;
    }

    .status-right {
        display: flex;
        align-items: center;
        margin-left: auto;
    }

    .eye {
        margin-right: 27px;
    }

    .status .view {
        justify-content: center;
        width: 34px;
        height: 34px;
        margin-right: 5px;
    }

    .status .view.active {
        background: #dadde4;
    }

    .fit {
        margin: 0 12px 0 24px;
    }

    .percent {
        margin-right: 23px;
    }

    .status-right input {
        appearance: none;
        width: 202px;
        height: 20px;
        margin: 0 22px 0 18px;
        background: linear-gradient(90deg, #44464f 50%, transparent 50%) center / 100% 1px no-repeat;
    }

    .status-right input::-webkit-slider-thumb {
        appearance: none;
        width: 19px;
        height: 19px;
        border: 2px solid #555862;
        border-radius: 50%;
        background: #f5f5fa;
    }

    .full-screen {
        margin-left: 16px;
    }

    /* taskbar */
    .taskbar {
        display: flex;
        flex: none;
        height: 60px;
        background: linear-gradient(90deg, #28343b, #222b35);
        color: #fff;
    }

    .app {
        display: flex;
        align-items: center;
        justify-content: center;
        width: 73px;
        margin-right: 2px;
        box-sizing: border-box;
    }

    .app.apart {
        margin-left: 7px;
    }

    .app:nth-child(1) svg {
        width: 26px;
    }

    .app.open {
        border-bottom: 3px solid #76b9ed;
        padding-top: 3px;
        margin-left: 7px;
        width: 61px;
        margin-right: 7px;
    }

    .app.active {
        width: 73px;
        margin: 0;
        background: #4d5960;
    }

    .tray {
        display: flex;
        align-items: center;
        margin-left: auto;
        padding-right: 24px;
    }

    .temperature {
        position: relative;
        display: flex;
        flex-direction: column;
        align-items: center;
        width: 76px;
        margin-right: 5px;
        line-height: 26px;
        color: #c4505f;
    }

    .temperature i {
        position: absolute;
        left: 18px;
        top: 9px;
    }

    .tray-icons {
        display: flex;
        gap: 12px;
        margin-right: 18px;
    }

    time {
        width: 92px;
        margin: 0 28px 0 26px;
        text-align: center;
    }

    .notice {
        position: relative;
    }

    .notice b {
        position: absolute;
        right: -8px;
        bottom: -9px;
        width: 20px;
        background: #d8121c;
        font-size: 14px;
        font-weight: 400;
        line-height: 20px;
    }

    .robot {
        position: absolute;
        left: 85px;
        bottom: 59px;
    }

    .meter {
        position: absolute;
        right: 0;
        display: flex;
        align-items: flex-end;
        background: #4a4c54;
    }

    .meter i {
        width: 7px;
        background: repeating-linear-gradient(#63b878 0 2px, #3c5148 2px 4px);
    }

    .meter.top {
        top: 149px;
        width: 15px;
        height: 88px;
        padding: 0 0 10px 5px;
        border-radius: 6px 0 0 6px;
        box-sizing: border-box;
    }

    .meter.top i {
        height: 36px;
    }

    .meter.bottom {
        right: 3px;
        top: 622px;
        width: 12px;
        height: 85px;
        padding: 0 0 3px 3px;
        border-radius: 6px;
        box-sizing: border-box;
    }

    .meter.bottom i {
        height: 8px;
    }
</style>
